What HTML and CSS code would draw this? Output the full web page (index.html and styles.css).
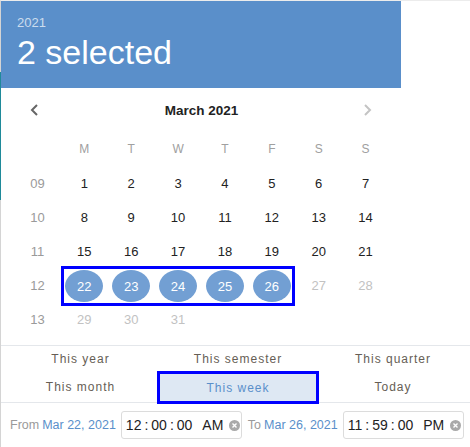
FILE: index.html
```html
<!DOCTYPE html>
<html>
<head>
<meta charset="utf-8">
<link rel="stylesheet" href="styles.css">
</head>
<body>
<div class="backdrop-strip"></div>
<div class="picker">
  <div class="head">
    <div class="head-year">2021</div>
    <div class="head-title">2 selected</div>
  </div>
  <div class="cal">
    <div class="nav">
      <span class="arrow"><svg width="12" height="14" viewBox="0 0 12 14"><path d="M8 2 L3 7 L8 12" fill="none" stroke="#666" stroke-width="2"/></svg></span>
      <span class="month">March 2021</span>
      <span class="arrow arrow-off"><svg width="12" height="14" viewBox="0 0 12 14"><path d="M4 2 L9 7 L4 12" fill="none" stroke="#c4c4c4" stroke-width="2"/></svg></span>
    </div>
    <div class="grid">
      <span></span>
      <span class="dow">M</span><span class="dow">T</span><span class="dow">W</span><span class="dow">T</span><span class="dow">F</span><span class="dow">S</span><span class="dow">S</span>

      <span class="wk">09</span>
      <span class="d">1</span><span class="d">2</span><span class="d">3</span><span class="d">4</span><span class="d">5</span><span class="d">6</span><span class="d">7</span>

      <span class="wk">10</span>
      <span class="d">8</span><span class="d">9</span><span class="d">10</span><span class="d">11</span><span class="d">12</span><span class="d">13</span><span class="d">14</span>

      <span class="wk">11</span>
      <span class="d">15</span><span class="d">16</span><span class="d">17</span><span class="d">18</span><span class="d">19</span><span class="d">20</span><span class="d">21</span>

      <span class="wk">12</span>
      <div class="week-sel">
        <span class="d"><span class="dot">22</span></span>
        <span class="d"><span class="dot">23</span></span>
        <span class="d"><span class="dot">24</span></span>
        <span class="d"><span class="dot">25</span></span>
        <span class="d"><span class="dot">26</span></span>
      </div>
      <span class="d muted">27</span><span class="d muted">28</span>

      <span class="wk">13</span>
      <span class="d muted">29</span><span class="d muted">30</span><span class="d muted">31</span>
    </div>
  </div>
  <div class="shortcuts">
    <span class="sc">This year</span>
    <span class="sc">This semester</span>
    <span class="sc">This quarter</span>
    <span class="sc">This month</span>
    <span class="sc sc-active">This week</span>
    <span class="sc">Today</span>
  </div>
  <div class="range">
    <span class="lbl">From</span>
    <span class="link">Mar 22, 2021</span>
    <div class="time">
      <span class="tv">12</span><span class="tc">:</span><span class="tv">00</span><span class="tc">:</span><span class="tv">00</span>
      <span class="ampm">AM</span>
      <svg class="clear" width="11" height="11" viewBox="0 0 11 11"><circle cx="5.5" cy="5.5" r="5.5" fill="#a9a9a9"/><path d="M3.5 3.5 L7.5 7.5 M7.5 3.5 L3.5 7.5" stroke="#fff" stroke-width="1.4"/></svg>
    </div>
    <span class="lbl lbl-to">To</span>
    <span class="link">Mar 26, 2021</span>
    <div class="time">
      <span class="tv">11</span><span class="tc">:</span><span class="tv">59</span><span class="tc">:</span><span class="tv">00</span>
      <span class="ampm">PM</span>
      <svg class="clear" width="11" height="11" viewBox="0 0 11 11"><circle cx="5.5" cy="5.5" r="5.5" fill="#a9a9a9"/><path d="M3.5 3.5 L7.5 7.5 M7.5 3.5 L3.5 7.5" stroke="#fff" stroke-width="1.4"/></svg>
    </div>
  </div>
</div>
</body>
</html>
```

FILE: styles.css
```css
html, body {
  margin: 0;
  padding: 0;
  background: #fff;
  font-family: "Liberation Sans", Arial, sans-serif;
}

.backdrop-strip {
  position: absolute;
  left: 0;
  top: 72px;
  width: 1px;
  height: 128px;
  background: #1f8a9a;
  z-index: 2;
}

.picker {
  width: 469px;
  height: 446px;
  border-top: 1px solid #ececec;
  border-left: 1px solid #d4d4d4;
  background: #fff;
  display: flex;
  flex-direction: column;
}

.head {
  width: 400px;
  height: 87px;
  flex-shrink: 0;
  background: #5a8fca;
  color: #fff;
  box-sizing: border-box;
  padding: 14px 0 0 16px;
}

.head-year {
  font-size: 13px;
  line-height: 16px;
  color: rgba(255, 255, 255, 0.7);
}

.head-title {
  font-size: 34px;
  line-height: 40px;
  margin-top: 1px;
}

.cal {
  width: 400px;
  padding-bottom: 9px;
}

.nav {
  height: 44px;
  display: flex;
  align-items: center;
  justify-content: space-between;
  padding: 0 28px 0 28px;
}

.arrow {
  display: flex;
  width: 12px;
  height: 14px;
}

.month {
  font-size: 13.5px;
  font-weight: bold;
  color: #222;
  margin-left: 1px;
}

.grid {
  display: grid;
  grid-template-columns: repeat(8, 46.875px);
  grid-auto-rows: 34px;
  margin-left: 13px;
}

.grid > span {
  display: flex;
  align-items: center;
  justify-content: center;
}

.dow {
  font-size: 12px;
  color: #a0a0a0;
}

.wk {
  font-size: 13px;
  color: #9a9a9a;
}

.d {
  font-size: 13px;
  color: #222;
}

.muted {
  color: #c2c2c2;
}

.week-sel {
  grid-column: 2 / 7;
  display: grid;
  grid-template-columns: repeat(5, 46.875px);
  margin: -2px 0 -4px 0;
  outline: 3px solid #0000ff;
  outline-offset: -3px;
}

.week-sel .d {
  display: flex;
  align-items: center;
  justify-content: center;
}

.dot {
  width: 38px;
  height: 32px;
  border-radius: 50%;
  background: #729fd3;
  color: #fff;
  display: flex;
  align-items: center;
  justify-content: center;
  font-size: 13px;
}

.shortcuts {
  flex-shrink: 0;
  border-top: 1px solid #e4e7eb;
  border-bottom: 1px solid #e4e7eb;
  display: grid;
  grid-template-columns: 159px 156px 1fr;
  grid-template-rows: 28px 28px;
}

.sc {
  display: flex;
  align-items: center;
  justify-content: center;
  font-size: 12px;
  letter-spacing: 1px;
  color: #665e55;
  padding-bottom: 2px;
}

.sc-active {
  background: #dee8f3;
  color: #5a8fca;
  outline: 3px solid #0000ff;
  margin-bottom: 1px;
  padding-bottom: 0;
}

.range {
  flex: 1;
  display: flex;
  align-items: center;
  padding-left: 9px;
  font-size: 12.5px;
  white-space: nowrap;
}

.range > * {
  flex-shrink: 0;
}

.lbl {
  color: #9a9a9a;
  margin-right: 3px;
}

.lbl-to {
  margin-left: 6px;
}

.link {
  color: #5a8fca;
  margin-right: 5px;
}

.time {
  width: 121px;
  height: 28px;
  box-sizing: border-box;
  border: 1px solid #dcdcdc;
  border-radius: 3px;
  display: flex;
  align-items: center;
  padding-left: 4px;
  font-size: 14px;
  color: #222;
}

.tc {
  margin: 0 3px 1px;
}

.ampm {
  margin-left: 10px;
}

.clear {
  margin-left: 6px;
}
```
